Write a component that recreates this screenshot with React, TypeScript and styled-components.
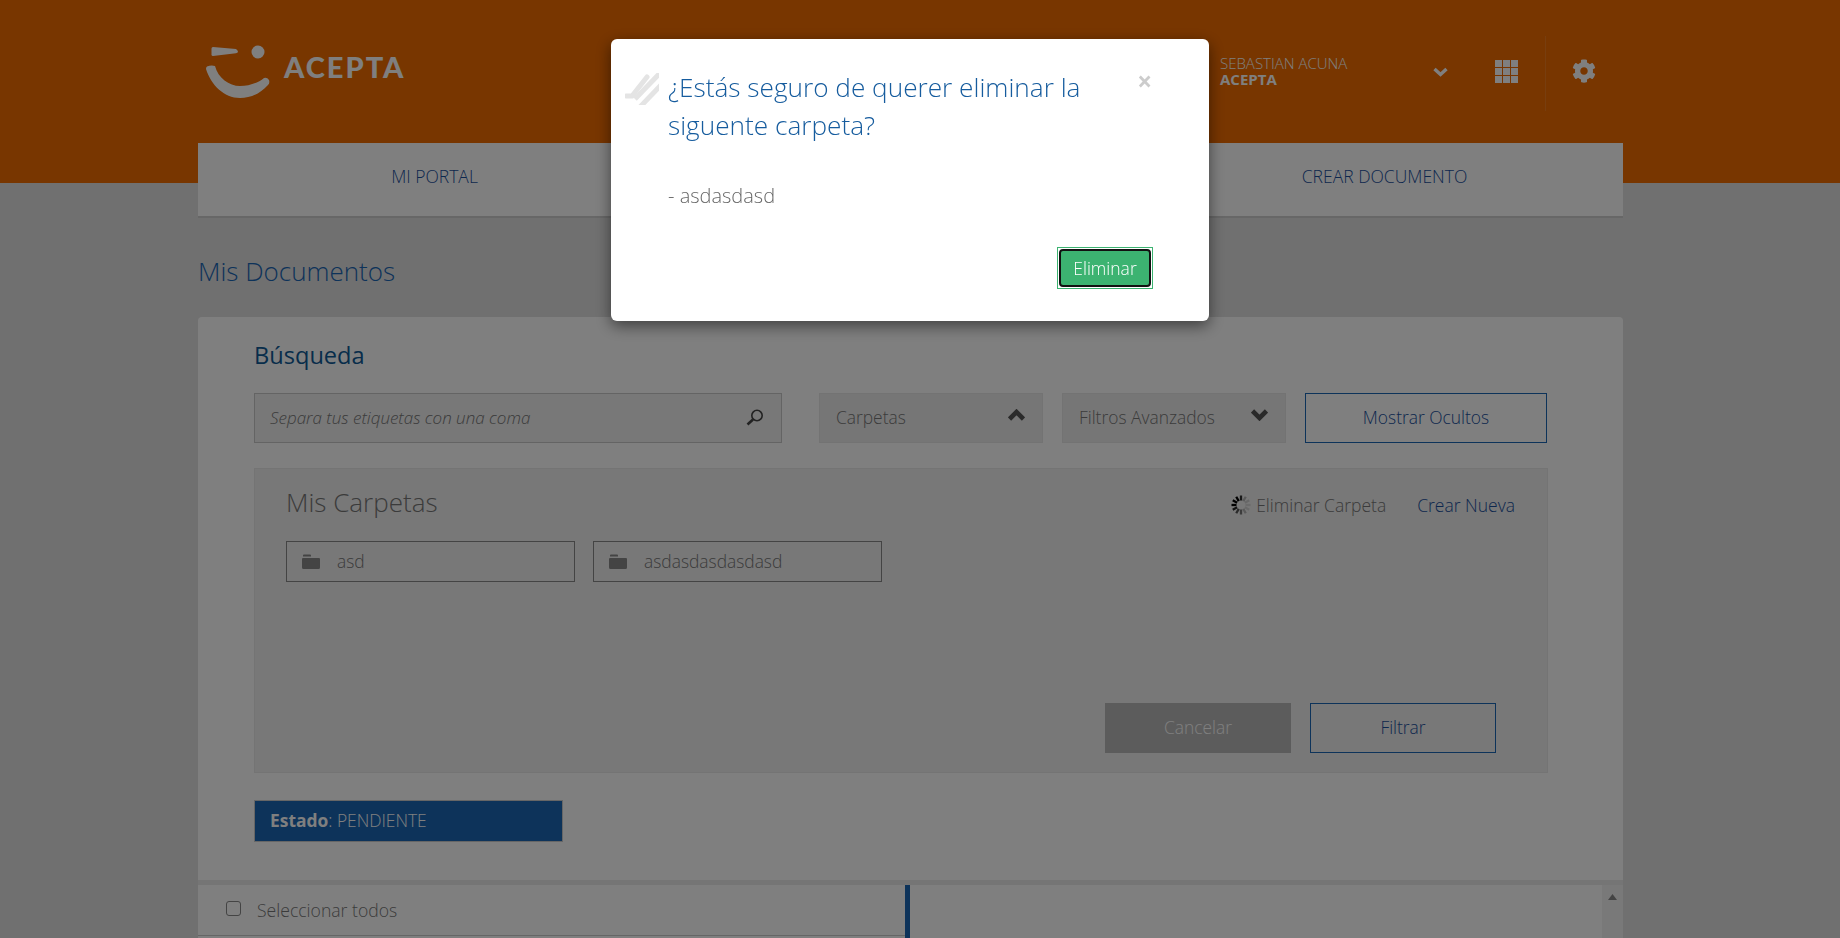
import React from "react";
import styled, { createGlobalStyle } from "styled-components";
import { FaCog } from "react-icons/fa";

const ORANGE = "#f06c00";
const BLUE = "#1a66b4";
const LINK = "#1a4f9c";

const Global = createGlobalStyle`
  html, body { margin: 0; height: 938px; overflow: hidden; background: #e0e0e0; }
  body { font-family: "Open Sans", "Liberation Sans", sans-serif; font-weight: 300; color: #777; }
  * { box-sizing: border-box; }
`;

const Header = styled.header`
  height: 143px;
  background: ${ORANGE};
`;
const Shell = styled.div`
  width: 1425px;
  margin-left: 198px;
`;
const HeaderInner = styled(Shell)`
  display: flex;
  align-items: flex-start;
  height: 143px;
  color: #fff;
`;
const Logo = styled.div`
  display: flex;
  align-items: flex-start;
  margin: 45px 0 0 7px;
  width: 1015px;
`;
const LogoWord = styled.span`
  font-family: "Lato", sans-serif;
  font-weight: 900;
  font-size: 29px;
  line-height: 30px;
  letter-spacing: 2px;
  margin: 7px 0 0 13px;
`;
const User = styled.div`
  width: 213px;
  margin-top: 55px;
  font-size: 15px;
  line-height: 16px;
`;
const UserName = styled.div`
  display: block;
`;
const UserOrg = styled.div`
  font-weight: 700;
`;
const HeaderIcon = styled.div<{ $w: number; $top: number; $ml: number }>`
  width: ${(p) => p.$w}px;
  margin-top: ${(p) => p.$top}px;
  margin-left: ${(p) => p.$ml}px;
  line-height: 0;
`;
const Divider = styled.div`
  width: 1px;
  height: 75px;
  margin: 36px 0 0 27px;
  background: rgba(255, 255, 255, 0.12);
`;

const NavBand = styled.div`
  background: linear-gradient(${ORANGE} 40px, transparent 40px);
`;
const Nav = styled(Shell)`
  display: grid;
  grid-template-columns: repeat(3, 1fr);
  height: 75px;
  background: #fff;
  border-bottom: 2px solid #cfcfcf;
`;
const NavItem = styled.div`
  display: flex;
  align-items: center;
  justify-content: center;
  padding: 0 2px 7px 0;
  font-size: 17.5px;
  color: ${LINK};
`;

const PageTitle = styled.h1`
  margin: 0;
  height: 99px;
  padding-top: 6px;
  display: flex;
  align-items: center;
  font-size: 26px;
  font-weight: 300;
  color: ${BLUE};
`;

const Panel = styled.section`
  height: 563px;
  padding: 24px 76px 0 56px;
  background: #fff;
  border-radius: 4px 4px 0 0;
`;
const PanelTitle = styled.h2`
  margin: 0 0 24px;
  font-size: 23.6px;
  line-height: 28px;
  font-weight: 400;
  color: #0f5a96;
`;
const Toolbar = styled.div`
  display: flex;
  height: 50px;
  margin-bottom: 25px;
`;
const SearchBox = styled.div`
  width: 528px;
  margin-right: 37px;
  display: flex;
  align-items: center;
  justify-content: space-between;
  padding: 0 17px 2px 15px;
  background: #f0f0f0;
  border: 1px solid #c8c8c8;
  font-size: 17px;
  font-style: italic;
  color: #777;
`;
const Dropdown = styled.div`
  width: 224px;
  margin-right: 19px;
  display: flex;
  align-items: center;
  justify-content: space-between;
  padding: 0 17px 2px 16px;
  background: #ededed;
  border: 1px solid #e6e6e6;
  font-size: 17.4px;
  color: #777;
`;
const ChevronBox = styled.svg`
  margin-top: -5px;
`;
const OutlineButton = styled.div<{ $w: number }>`
  width: ${(p) => p.$w}px;
  display: flex;
  align-items: center;
  justify-content: center;
  padding-bottom: 2px;
  border: 1px solid ${BLUE};
  font-size: 17.4px;
  color: ${LINK};
`;

const FolderPanel = styled.div`
  display: flex;
  flex-direction: column;
  width: 1294px;
  height: 305px;
  background: #f0f0f0;
  border: 1px solid #e8e8e8;
`;
const FolderHeader = styled.div`
  display: flex;
  align-items: center;
  height: 71px;
  padding: 0 32px 6px 31px;
  justify-content: space-between;
`;
const FolderTitle = styled.div`
  font-size: 26px;
  line-height: 34px;
  color: #777;
`;
const FolderActions = styled.div`
  display: flex;
  align-items: center;
  margin-top: 7px;
  font-size: 17.5px;
`;
const Action = styled.span<{ $blue?: boolean }>`
  color: ${(p) => (p.$blue ? LINK : "#777")};
  margin-left: ${(p) => (p.$blue ? "31px" : "5px")};
`;
const FolderList = styled.div`
  display: flex;
  gap: 18px;
  padding: 1px 0 0 31px;
`;
const FolderChip = styled.div`
  display: flex;
  align-items: center;
  gap: 17px;
  width: 289px;
  height: 41px;
  padding-left: 15px;
  border: 1px solid #888;
  font-size: 17.4px;
  color: #777;
`;
const FolderLabel = styled.span`
  margin-top: -1px;
`;
const FolderFooter = styled.div`
  display: flex;
  justify-content: flex-end;
  gap: 19px;
  height: 50px;
  margin-top: auto;
  margin-bottom: 19px;
  padding-right: 51px;
`;
const CancelButton = styled.div`
  width: 186px;
  display: flex;
  align-items: center;
  justify-content: center;
  padding-bottom: 2px;
  background: #b8b8b8;
  font-size: 17.4px;
  color: #fff;
`;
const StatusChip = styled.div`
  display: flex;
  align-items: center;
  width: 309px;
  height: 42px;
  margin-top: 27px;
  padding: 0 0 2px 15px;
  background: ${BLUE};
  border: 1px solid #ccc;
  font-size: 17.4px;
  color: #fff;
  white-space: pre;
`;
const StatusKey = styled.strong`
  font-weight: 700;
`;
const Gap = styled.div`
  height: 5px;
  background: #ebebeb;
`;
const ListRow = styled(Shell)`
  display: flex;
  height: 53px;
  background: #fff;
`;
const ListLeft = styled.div`
  display: flex;
  align-items: center;
  width: 707px;
  height: 51px;
  padding: 0 0 0 28px;
  border-bottom: 1px solid #ccc;
  font-size: 17.6px;
  color: #777;
`;
const Check = styled.span`
  width: 15px;
  height: 15px;
  margin: -4px 16px 0 0;
  border: 1.5px solid #888;
  border-radius: 3px;
  background: #fff;
`;
const BlueBar = styled.div`
  width: 5px;
  background: ${BLUE};
`;
const ListRight = styled.div`
  flex: 1;
`;
const ScrollTrack = styled.div`
  width: 21px;
  padding-top: 9px;
  display: flex;
  justify-content: center;
  align-items: flex-start;
  background: #f3f3f3;
`;

const Overlay = styled.div`
  position: fixed;
  inset: 0;
  background: rgba(0, 0, 0, 0.5);
`;
const Modal = styled.div`
  position: fixed;
  left: 611px;
  top: 39px;
  width: 598px;
  height: 282px;
  padding: 30px 56px 32px 57px;
  display: flex;
  flex-direction: column;
  background: #fff;
  border-radius: 6px;
  box-shadow: 0 5px 15px rgba(0, 0, 0, 0.5);
`;
const Stripes = styled.svg`
  position: absolute;
  left: 14px;
  top: 34px;
`;
const ModalHead = styled.div`
  display: flex;
  justify-content: space-between;
`;
const ModalTitle = styled.h3`
  margin: 0;
  width: 440px;
  font-size: 26.2px;
  line-height: 37.5px;
  font-weight: 300;
  color: #165c9e;
`;
const CloseX = styled.span`
  margin: -1px 1px 0 0;
  font-size: 26px;
  line-height: 26px;
  font-weight: 700;
  color: #ccc;
`;
const ModalBody = styled.p`
  margin: 40px 0 39px;
  font-size: 20px;
  line-height: 24px;
  color: #666;
`;
const ModalFooter = styled.div`
  display: flex;
  justify-content: flex-end;
`;
const FocusRing = styled.div`
  padding: 1px;
  border: 1px solid #3cb371;
`;
const DangerButton = styled.button`
  display: block;
  width: 92px;
  height: 38px;
  padding: 0;
  background: #3cb371;
  border: 2px solid #111;
  border-radius: 4px;
  font-family: inherit;
  font-weight: 300;
  font-size: 17.5px;
  color: #fff;
`;

const FolderIcon = () => (
  <svg width="18" height="15" viewBox="0 0 18 15">
    <path d="M1 1.5 Q1 .5 2 .5H8Q9 .5 9 1.5V2.5H1Z M1 4H17Q18 4 18 5V13.5Q18 15 16.5 15H1.5Q0 15 0 13.5V5Q0 4 1 4Z" fill="#888" />
  </svg>
);
const Chevron = ({ up }: { up?: boolean }) => (
  <ChevronBox width="17" height="12" viewBox="0 0 17 12">
    <polyline points={up ? "1.5,10 8.5,3 15.5,10" : "1.5,2 8.5,9 15.5,2"} fill="none" stroke="#555" strokeWidth="4.6" />
  </ChevronBox>
);
const SpinnerIcon = () => {
  const ops = [0.8, 0.25, 0.14, 0.1, 0.12, 0.25, 0.5, 0.65, 0.85, 1, 1, 1];
  return (
    <svg width="20" height="20" viewBox="-10 -10 20 20">
      {ops.map((o, i) => (
        <line key={i} x1="0" y1="-4.5" x2="0" y2="-9.5" stroke="#000" strokeWidth="2.3" strokeOpacity={o} transform={`rotate(${i * 30})`} />
      ))}
    </svg>
  );
};

export default function App() {
  return (
    <>
      <Global />
      <Header>
        <HeaderInner>
          <Logo>
            <svg width="66" height="54" viewBox="0 0 66 54" fill="#fff">
              <path d="M8 2 L31 4 Q33 5.5 33 7 Q32.5 8 31 8.3 L8 11 Q6.5 11 6.5 9.5 V3.5 Q6.5 2 8 2Z" />
              <circle cx="53" cy="7" r="6.5" />
              <path d="M2 21.5 Q6 20 10 21 C13 33 24 41 35 41 C44 41 53 38 59 33 Q62 32 64 35 Q65 38 63 40 C55 49 45 53 35 53 C19 53 6 40 1 24 Q1 22 2 21.5Z" />
            </svg>
            <LogoWord>ACEPTA</LogoWord>
          </Logo>
          <User>
            <UserName>SEBASTIAN ACUNA</UserName>
            <UserOrg>ACEPTA</UserOrg>
          </User>
          <HeaderIcon $w={15} $top={67} $ml={0}>
            <svg width="15" height="10" viewBox="0 0 15 10">
              <polyline points="1.5,2 7.5,7.5 13.5,2" fill="none" stroke="#fff" strokeWidth="3.4" />
            </svg>
          </HeaderIcon>
          <HeaderIcon $w={23} $top={60} $ml={47}>
            <svg width="23" height="23" viewBox="0 0 23 23" fill="#fff">
              {[0, 8, 16].flatMap((y) =>
                [0, 8, 16].map((x) => <rect key={`${x}-${y}`} x={x} y={y} width="7" height="7" />)
              )}
            </svg>
          </HeaderIcon>
          <Divider />
          <HeaderIcon $w={24} $top={59} $ml={26}>
            <FaCog size={24} color="#fff" />
          </HeaderIcon>
        </HeaderInner>
      </Header>
      <NavBand>
        <Nav>
          <NavItem>MI PORTAL</NavItem>
          <NavItem />
          <NavItem>CREAR DOCUMENTO</NavItem>
        </Nav>
      </NavBand>
      <Shell>
        <PageTitle>Mis Documentos</PageTitle>
        <Panel>
          <PanelTitle>Búsqueda</PanelTitle>
          <Toolbar>
            <SearchBox>
              Separa tus etiquetas con una coma
              <svg width="18" height="17" viewBox="0 0 18 17">
                <circle cx="11" cy="6.5" r="5.2" fill="none" stroke="#444" strokeWidth="1.6" />
                <line x1="7" y1="10.5" x2="1.5" y2="15.5" stroke="#444" strokeWidth="2.6" />
              </svg>
            </SearchBox>
            <Dropdown>
              Carpetas
              <Chevron up />
            </Dropdown>
            <Dropdown>
              Filtros Avanzados
              <Chevron />
            </Dropdown>
            <OutlineButton $w={242}>Mostrar Ocultos</OutlineButton>
          </Toolbar>
          <FolderPanel>
            <FolderHeader>
              <FolderTitle>Mis Carpetas</FolderTitle>
              <FolderActions>
                <SpinnerIcon />
                <Action>Eliminar Carpeta</Action>
                <Action $blue>Crear Nueva</Action>
              </FolderActions>
            </FolderHeader>
            <FolderList>
              <FolderChip>
                <FolderIcon />
                <FolderLabel>asd</FolderLabel>
              </FolderChip>
              <FolderChip>
                <FolderIcon />
                <FolderLabel>asdasdasdasdasd</FolderLabel>
              </FolderChip>
            </FolderList>
            <FolderFooter>
              <CancelButton>Cancelar</CancelButton>
              <OutlineButton $w={186}>Filtrar</OutlineButton>
            </FolderFooter>
          </FolderPanel>
          <StatusChip>
            <StatusKey>Estado</StatusKey>: PENDIENTE
          </StatusChip>
        </Panel>
        <Gap />
      </Shell>
      <ListRow>
        <ListLeft>
          <Check />
          Seleccionar todos
        </ListLeft>
        <BlueBar />
        <ListRight />
        <ScrollTrack>
          <svg width="9" height="6" viewBox="0 0 9 6">
            <polygon points="4.5,0 9,6 0,6" fill="#888" />
          </svg>
        </ScrollTrack>
      </ListRow>
      <Overlay />
      <Modal>
        <Stripes width="34" height="32" viewBox="0 0 34 32">
          <g stroke="#e4e4e4" strokeWidth="5" fill="none">
            <path d="M1 23 H7 L22 4" strokeLinecap="round" />
            <path d="M10 26 L36 -1" />
            <path d="M15 34 L36 12" />
          </g>
        </Stripes>
        <ModalHead>
          <ModalTitle>¿Estás seguro de querer eliminar la siguente carpeta?</ModalTitle>
          <CloseX>×</CloseX>
        </ModalHead>
        <ModalBody>- asdasdasd</ModalBody>
        <ModalFooter>
          <FocusRing>
            <DangerButton>Eliminar</DangerButton>
          </FocusRing>
        </ModalFooter>
      </Modal>
    </>
  );
}
